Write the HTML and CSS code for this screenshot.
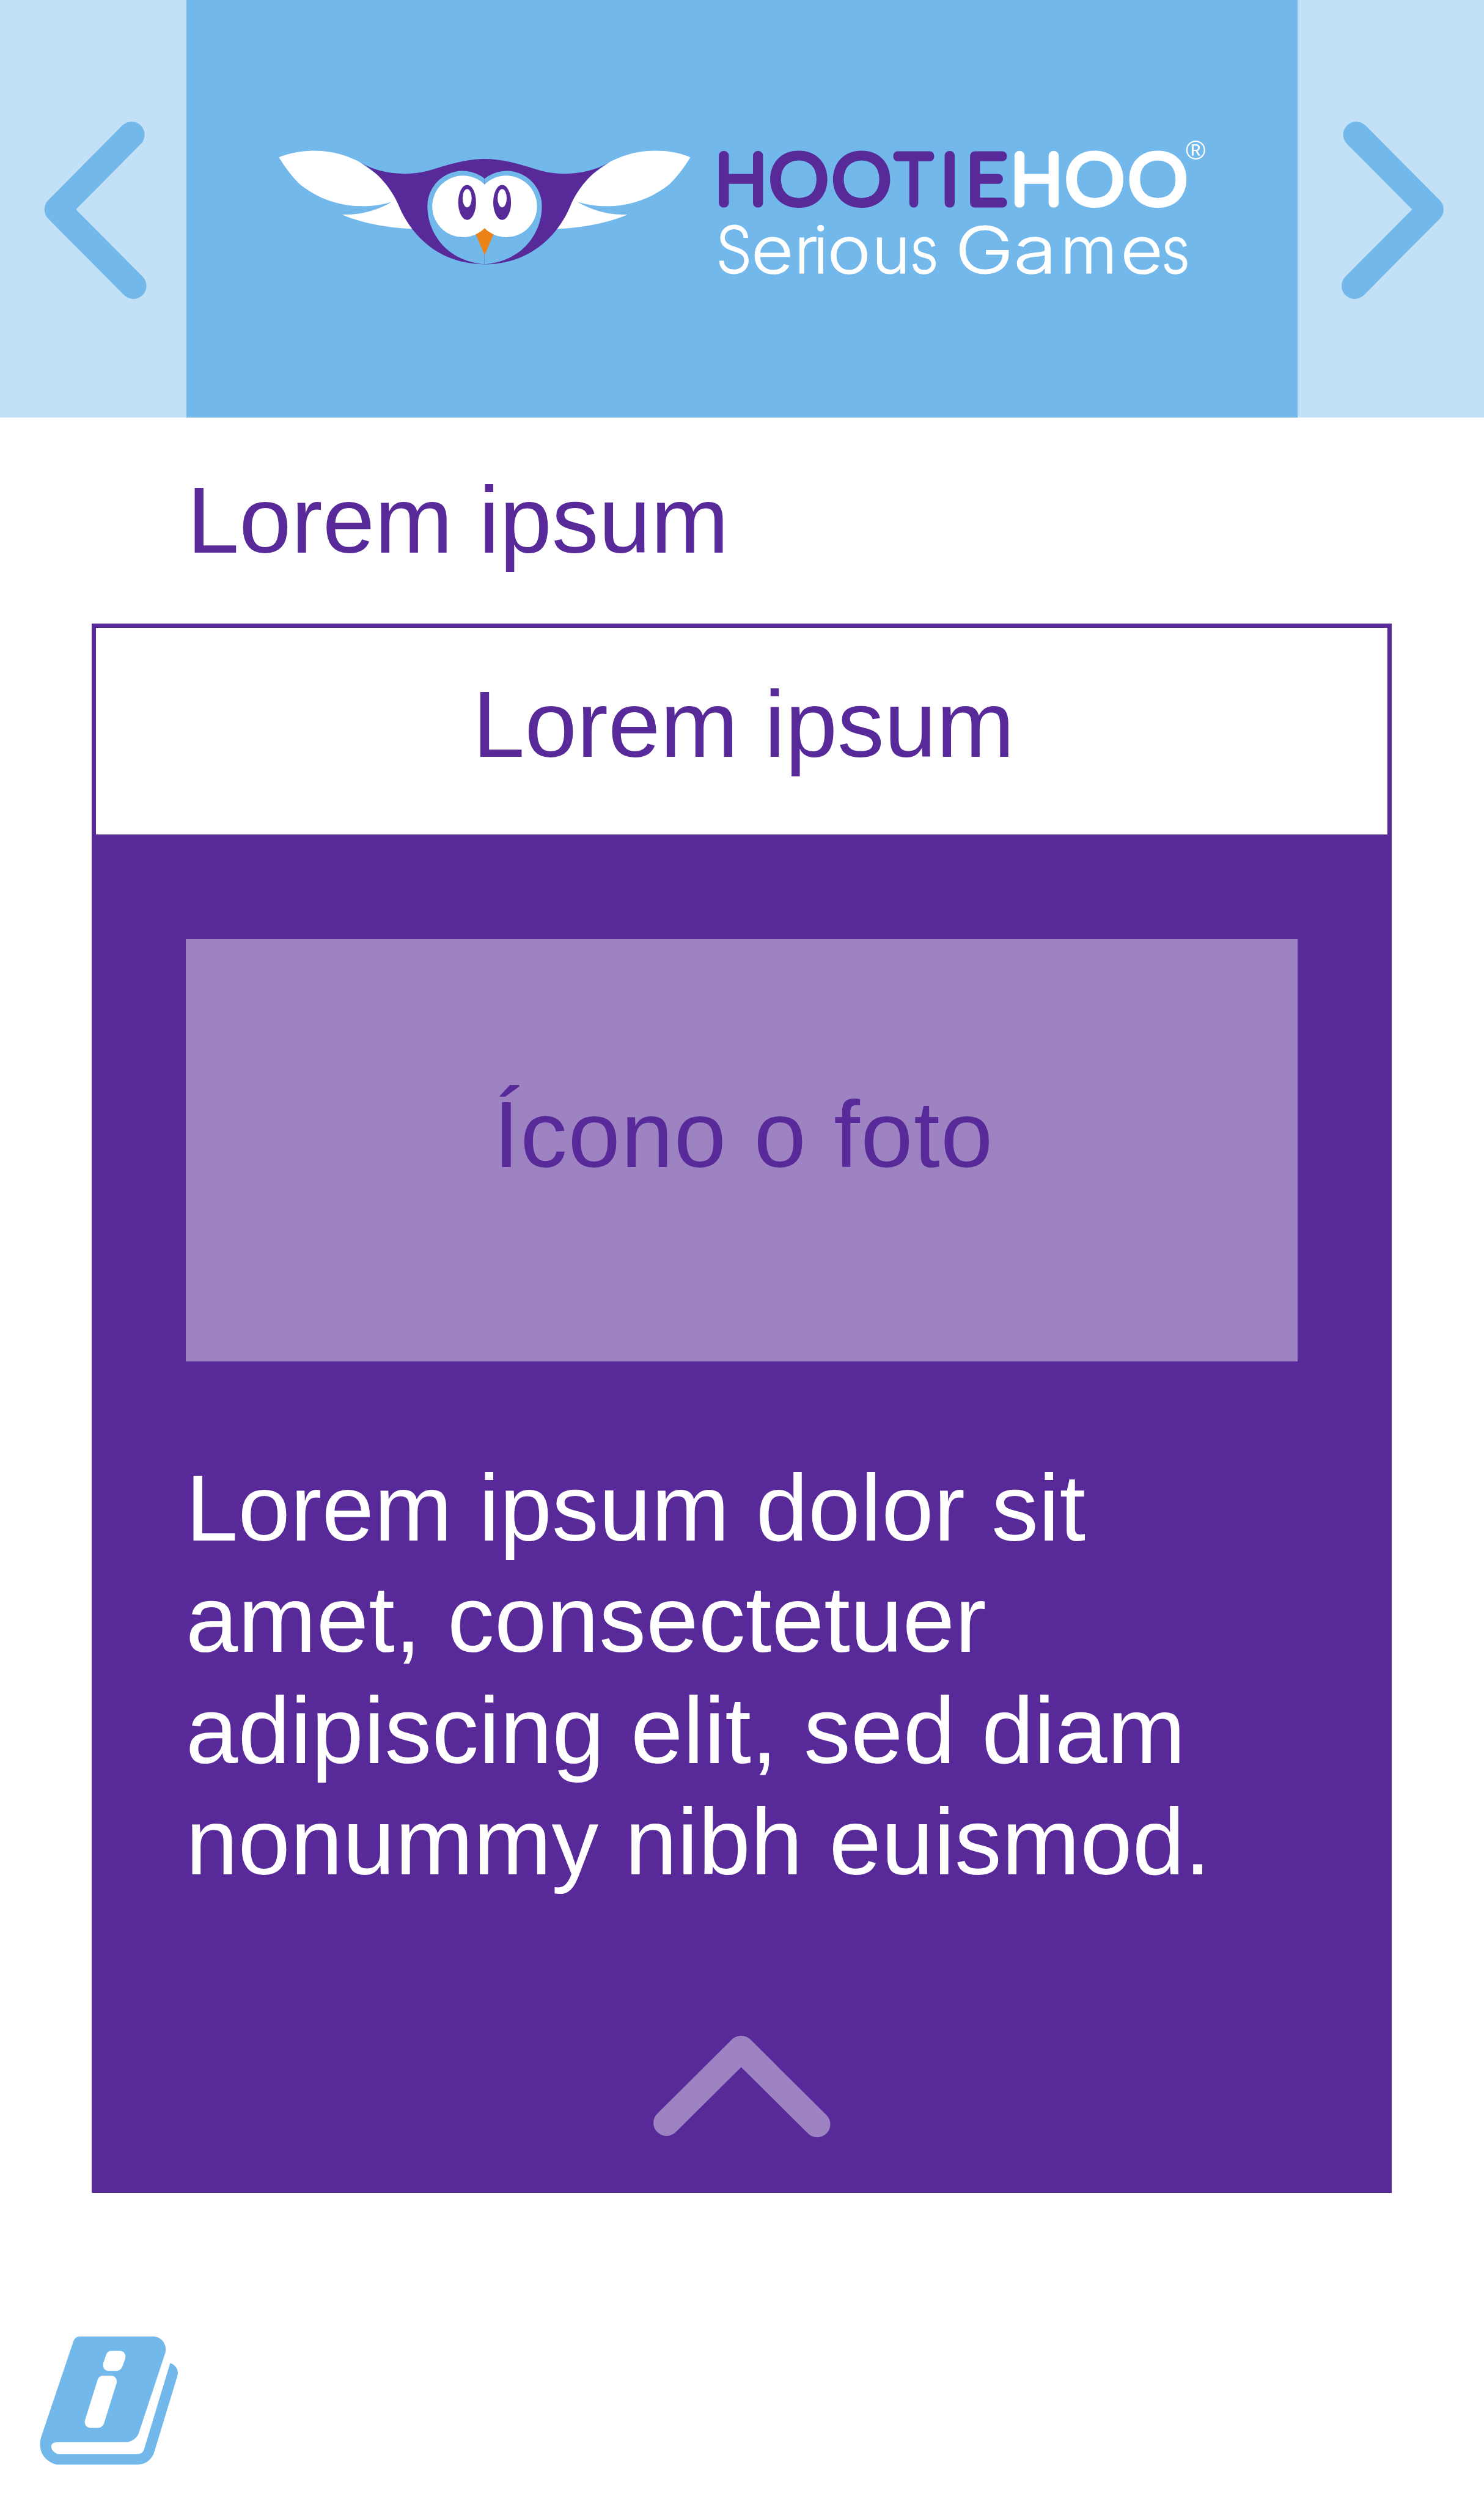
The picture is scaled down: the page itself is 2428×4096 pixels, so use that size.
FILE: index.html
```html
<!DOCTYPE html>
<html lang="es">
<head>
<meta charset="utf-8">
<title>Hootiehoo Serious Games</title>
<link rel="stylesheet" href="styles.css">
</head>
<body>
<div class="page">
  <header class="banner">
    <button class="nav" aria-label="Anterior">
      <svg class="nav-icon" viewBox="0 0 335 751">
        <path d="M236.5 242.3L103.200 376.7L239.7 514.2"/>
      </svg>
    </button>
    <div class="brand">
      <svg class="logo" viewBox="335 0 1998 751">
        <g class="wing" id="wing">
          <path class="white" d="M501 283C540 266 600 266 646 291.500L700 330L770 412C723 413 664 407 614 386C650 387 680 377 704 363C640 382 580 365 538 331C524 317 512 301 501 283Z"/>
          <path class="purple" d="M646 291.500C672 307 700 312.500 726 312.500C750 312.500 765 308.500 780 304C811 295 838 286 871.500 286L871.500 475.500C790 475 740 425 717 371C704 340 680 310 646 291.500Z"/>
          <path class="sky" d="M871.500 475.500C800 470 768 416 768 371.500A63.500 63.500 0 0 1 871.500 321.500Z"/>
        </g>
        <use href="#wing" transform="translate(1742 0) scale(-1 1)"/>
        <path class="beak" d="M871 405L855 421L871 459L887 421Z"/>
        <path class="white" d="M871 332A55.3 55.3 0 1 0 871 410.5A55.3 55.3 0 1 0 871 332Z"/>
        <ellipse class="purple" cx="839.5" cy="364" rx="16" ry="31.5"/>
        <ellipse class="purple" cx="902.5" cy="364" rx="16" ry="31.5"/>
        <ellipse class="white" cx="839.5" cy="356.5" rx="8.2" ry="16.5"/>
        <ellipse class="white" cx="902.5" cy="356.5" rx="8.2" ry="16.5"/>
        <text class="name" y="365"><tspan class="name-a"><tspan x="1332">H</tspan><tspan x="1436" textLength="103" lengthAdjust="spacingAndGlyphs">O</tspan><tspan x="1549" textLength="103" lengthAdjust="spacingAndGlyphs">O</tspan><tspan x="1643" textLength="62" lengthAdjust="spacingAndGlyphs">T</tspan><tspan x="1707.5 1774">IE</tspan></tspan><tspan class="name-b"><tspan x="1864">H</tspan><tspan x="1968.5" textLength="103" lengthAdjust="spacingAndGlyphs">O</tspan><tspan x="2082" textLength="103" lengthAdjust="spacingAndGlyphs">O</tspan></tspan></text>
        <text class="sub" y="492"><tspan x="1319.5" textLength="65" lengthAdjust="spacingAndGlyphs">S</tspan><tspan x="1388.5" textLength="77" lengthAdjust="spacingAndGlyphs">e</tspan><tspan x="1449 1475.5">ri</tspan><tspan x="1526.5" textLength="79" lengthAdjust="spacingAndGlyphs">o</tspan><tspan x="1602">u</tspan><tspan x="1661.5" textLength="52" lengthAdjust="spacingAndGlyphs">s</tspan><tspan x="1700"> </tspan><tspan x="1770" textLength="106" lengthAdjust="spacingAndGlyphs">G</tspan><tspan x="1861.5" textLength="78" lengthAdjust="spacingAndGlyphs">a</tspan><tspan x="1958">m</tspan><tspan x="2053" textLength="77" lengthAdjust="spacingAndGlyphs">e</tspan><tspan x="2114" textLength="52" lengthAdjust="spacingAndGlyphs">s</tspan></text>
        <text class="reg" x="2150" y="287">®</text>
      </svg>
    </div>
    <button class="nav" aria-label="Siguiente">
      <svg class="nav-icon" viewBox="0 0 335 751">
        <path d="M105.400 242.3L239 376.7L102.500 514.2"/>
      </svg>
    </button>
  </header>
  <main class="content">
    <h1 class="title">Lorem ipsum</h1>
    <section class="card">
      <h2 class="card-title">Lorem ipsum</h2>
      <div class="card-body">
        <div class="photo">Ícono o foto</div>
        <p class="text">Lorem ipsum dolor sit<br>amet, consectetuer<br>adipiscing elit, sed diam<br>nonummy nibh euismod.</p>
        <svg class="collapse" viewBox="1170 3655 328 192">
          <path d="M1198 3816L1332.5 3682.5L1469.5 3818.5"/>
        </svg>
      </div>
    </section>
  </main>
  <footer class="footer">
    <svg class="book" viewBox="70 4198 252 234">
      <path d="M143 4200H277C292 4201 301 4216 297 4230L249 4375C245 4384 236 4390 226 4390.500H101C88 4391 89 4406 103 4411.500H248C254 4411.500 258 4407 259 4403L306 4248C316 4251 322 4261 319 4271L277 4409C273 4421 262 4430 249 4430.500H101C76 4423 67 4402 74 4380L132 4208C134 4203 138 4200 143 4200Z"/>
      <path class="white" d="M199 4226H215C223 4226 227 4233 225 4240L220 4254C218 4259 214 4262 209 4262H194C187 4261 184 4255 185.500 4248L190 4235C192 4229 195 4226 199 4226Z"/>
      <path class="white" d="M185 4270.500H200C207 4271 211 4277 209.500 4284L187 4356C185 4361 181 4364.500 176 4364.500H162C155 4364 151 4358 152.500 4351L175 4279C176 4274 180 4271 185 4270.500Z"/>
    </svg>
  </footer>
</div>
</body>
</html>
```
FILE: styles.css
```css
:root {
  --sky: #72b8eb;
  --sky-light: #c3e1f6;
  --purple: #582998;
  --lilac: #9e83c3;
}
* { box-sizing: border-box; margin: 0; padding: 0; }
body {
  background: #fff;
  font-family: "Liberation Sans", Arial, sans-serif;
}
.page {
  width: 2428px;
  height: 4096px;
  display: flex;
  flex-direction: column;
}
.banner {
  display: grid;
  grid-template-columns: 305px 1fr 305px;
  height: 683px;
  background: var(--sky-light);
}
.nav { border: 0; background: var(--sky-light); }
.nav-icon { display: block; width: 305px; height: 683px; }
.nav-icon path {
  fill: none;
  stroke: var(--sky);
  stroke-width: 47;
  stroke-linecap: round;
  stroke-linejoin: round;
}
.brand { background: var(--sky); }
.logo { display: block; width: 1818px; height: 683px; }
.white { fill: #fff; }
.purple { fill: var(--purple); }
.sky { fill: var(--sky); }
.beak { fill: #ec8316; }
.name {
  font: 100 122px Lato, sans-serif;
  text-anchor: middle;
  stroke-width: 16.5;
  stroke-linejoin: round;
}
.name-a { fill: var(--purple); stroke: var(--purple); }
.name-b { fill: #fff; stroke: #fff; }
.sub {
  font: 300 117px Inter, sans-serif;
  text-anchor: middle;
  fill: #fff;
  stroke: #fff;
  stroke-width: 1;
}
.reg {
  font: 400 48px "Liberation Sans", sans-serif;
  text-anchor: middle;
  fill: #fff;
}
.title, .card-title, .photo, .text {
  font-size: 153.4px;
  font-weight: 400;
}
.title {
  padding: 80px 0 0 306px;
  height: 337px;
  line-height: 176px;
  color: var(--purple);
}
.card {
  width: 2127px;
  height: 2567px;
  margin-left: 150px;
  border: 7px solid var(--purple);
  background: var(--purple);
  display: flex;
  flex-direction: column;
}
.card-title {
  height: 338px;
  padding: 70px 0 0 6px;
  background: #fff;
  color: var(--purple);
  line-height: 176px;
  text-align: center;
}
.card-body {
  flex: 1;
  padding: 171px 147px 0;
  display: flex;
  flex-direction: column;
}
.photo {
  height: 691px;
  background: var(--lilac);
  color: var(--purple);
  text-align: center;
  line-height: 176px;
  letter-spacing: 1.4px;
  padding: 232px 0 0 6px;
}
.text {
  margin-top: 149px;
  color: #fff;
  line-height: 182px;
  letter-spacing: 0.3px;
  white-space: nowrap;
}
.collapse {
  align-self: center;
  width: 298px;
  height: 175px;
  margin-top: 222px;
}
.collapse path {
  fill: none;
  stroke: var(--lilac);
  stroke-width: 47;
  stroke-linecap: round;
  stroke-linejoin: round;
}
.footer { padding: 233px 0 0 64px; }
.book { display: block; width: 229px; height: 213px; fill: var(--sky); }
```
